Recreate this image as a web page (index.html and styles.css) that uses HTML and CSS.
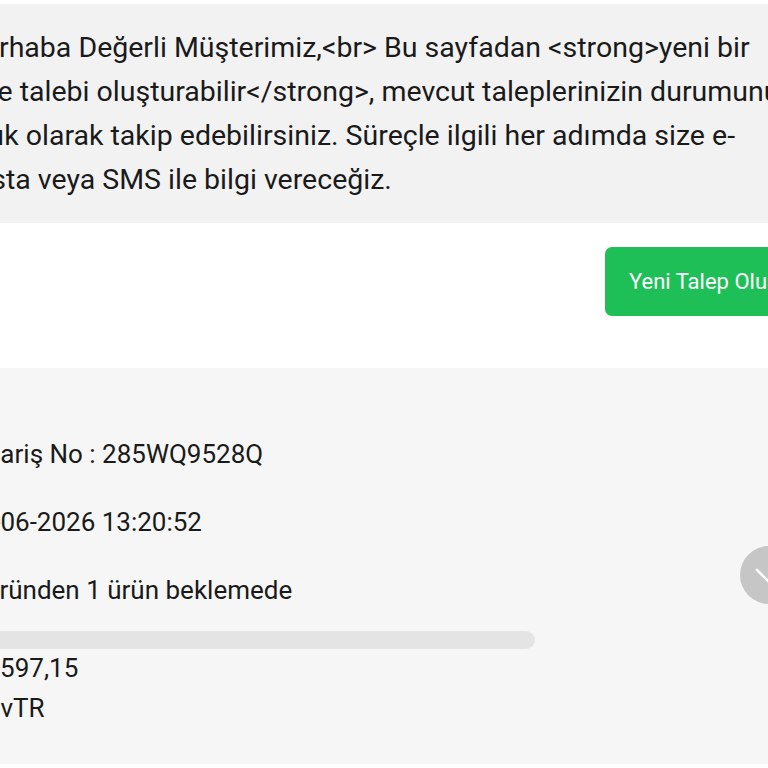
FILE: index.html
```html
<!DOCTYPE html>
<html lang="tr">
<head>
    <meta charset="UTF-8">
    <meta name="viewport" content="width=device-width, initial-scale=1.0">
    <title>İade Taleplerim</title>
    <link rel="stylesheet" href="styles.css">
</head>
<body>
    <div class="page">
        <div class="notice">
            <p>Merhaba Değerli Müşterimiz,&lt;br&gt; Bu sayfadan &lt;strong&gt;yeni bir iade talebi oluşturabilir&lt;/strong&gt;, mevcut taleplerinizin durumunu anlık olarak takip edebilirsiniz. Süreçle ilgili her adımda size e-posta veya SMS ile bilgi vereceğiz.</p>
        </div>

        <div class="actions">
            <button class="btn-new">Yeni Talep Oluştur</button>
        </div>

        <div class="order-card">
            <div class="order-info">
                <div class="order-row">Sipariş No : 285WQ9528Q</div>
                <div class="order-row">12-06-2026 13:20:52</div>
                <div class="order-row">2 üründen 1 ürün beklemede</div>
                <div class="progress"><div class="progress-fill" style="width: 0%"></div></div>
                <div class="order-total">12.597,15</div>
                <div class="order-currency">NOvTR</div>
            </div>
            <button class="toggle" aria-label="Detaylar">
                <svg width="28" height="28" viewBox="0 0 28 28" fill="none" stroke="#fff" stroke-width="2.6" stroke-linecap="round" stroke-linejoin="round">
                    <polyline points="2,9 14,21 26,9"></polyline>
                </svg>
            </button>
        </div>
    </div>
</body>
</html>
```

FILE: styles.css
```css
body {
    margin: 0;
    font-family: Roboto, "Noto Sans", sans-serif;
    color: #1a1a1a;
    background: #fff;
    overflow: hidden;
    height: 100vh;
}
.page {
    margin-left: -60px;
    width: 880px;
    padding-top: 4px;
}
.notice {
    background: #f2f2f2;
    padding: 22px 21px 21px 19px;
}
.notice p {
    margin: 0;
    font-size: 28.5px;
    line-height: 44px;
}
.actions {
    display: flex;
    padding: 24px 0 0 665px;
}
.btn-new {
    height: 69px;
    padding: 0 24px;
    font-family: Roboto, sans-serif;
    font-size: 22px;
    color: #fff;
    background: #1fbf57;
    border: none;
    border-radius: 7px;
    white-space: nowrap;
}
.order-card {
    display: flex;
    align-items: center;
    margin-top: 52px;
    background: #f6f6f6;
    padding: 52px 22px 35px 24px;
}
.order-info {
    flex: 1;
    font-size: 26px;
}
.order-row {
    line-height: 68px;
}
.progress {
    width: 571px;
    height: 18px;
    margin-top: 7px;
    background: #e4e4e4;
    border-radius: 9px;
    overflow: hidden;
}
.progress-fill {
    height: 100%;
    background: #1fbf57;
}
.order-total {
    line-height: 38px;
}
.order-currency {
    line-height: 42px;
}
.toggle {
    display: flex;
    align-items: center;
    justify-content: center;
    width: 58px;
    height: 58px;
    padding: 0;
    border: none;
    border-radius: 50%;
    background: #c6c6c6;
}
```
